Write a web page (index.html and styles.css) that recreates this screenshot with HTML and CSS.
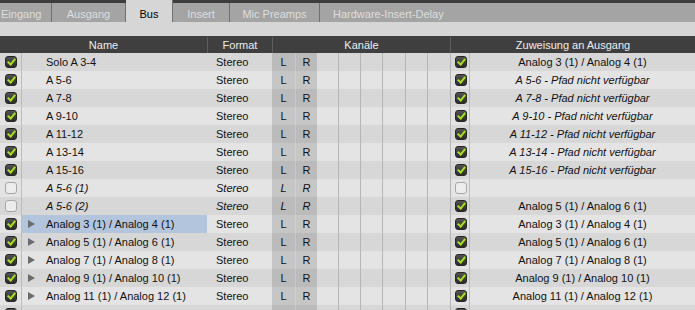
FILE: index.html
```html
<!DOCTYPE html>
<html lang="de">

<head>
    <meta charset="UTF-8">
    <title>Bus</title>
    <link rel="stylesheet" href="styles.css">
</head>

<body>
    <div class="tabs">
        <div class="tab first">Eingang</div>
        <div class="tab">Ausgang</div>
        <div class="tab active">Bus</div>
        <div class="tab">Insert</div>
        <div class="tab">Mic Preamps</div>
        <div class="tab last">Hardware-Insert-Delay</div>
    </div>

    <div class="toolbar"></div>

    <div class="table">
        <div class="row head">
            <div class="h-name">Name</div>
            <div class="h-format">Format</div>
            <div class="h-ch">Kanäle</div>
            <div class="h-assign">Zuweisung an Ausgang</div>
        </div>

        <div class="row">
            <div class="cb"><span class="chk on"></span></div>
            <div class="name">Solo A 3-4</div>
            <div class="format">Stereo</div>
            <div class="l">L</div><div class="r">R</div>
            <div class="ch"></div><div class="ch"></div><div class="ch"></div><div class="ch"></div><div class="ch"></div><div class="ch"></div>
            <div class="acb"><span class="chk on"></span></div>
            <div class="assign">Analog 3 (1) / Analog 4 (1)</div>
        </div>
        <div class="row">
            <div class="cb"><span class="chk on"></span></div>
            <div class="name">A 5-6</div>
            <div class="format">Stereo</div>
            <div class="l">L</div><div class="r">R</div>
            <div class="ch"></div><div class="ch"></div><div class="ch"></div><div class="ch"></div><div class="ch"></div><div class="ch"></div>
            <div class="acb"><span class="chk on"></span></div>
            <div class="assign missing">A 5-6 - Pfad nicht verfügbar</div>
        </div>
        <div class="row">
            <div class="cb"><span class="chk on"></span></div>
            <div class="name">A 7-8</div>
            <div class="format">Stereo</div>
            <div class="l">L</div><div class="r">R</div>
            <div class="ch"></div><div class="ch"></div><div class="ch"></div><div class="ch"></div><div class="ch"></div><div class="ch"></div>
            <div class="acb"><span class="chk on"></span></div>
            <div class="assign missing">A 7-8 - Pfad nicht verfügbar</div>
        </div>
        <div class="row">
            <div class="cb"><span class="chk on"></span></div>
            <div class="name">A 9-10</div>
            <div class="format">Stereo</div>
            <div class="l">L</div><div class="r">R</div>
            <div class="ch"></div><div class="ch"></div><div class="ch"></div><div class="ch"></div><div class="ch"></div><div class="ch"></div>
            <div class="acb"><span class="chk on"></span></div>
            <div class="assign missing">A 9-10 - Pfad nicht verfügbar</div>
        </div>
        <div class="row">
            <div class="cb"><span class="chk on"></span></div>
            <div class="name">A 11-12</div>
            <div class="format">Stereo</div>
            <div class="l">L</div><div class="r">R</div>
            <div class="ch"></div><div class="ch"></div><div class="ch"></div><div class="ch"></div><div class="ch"></div><div class="ch"></div>
            <div class="acb"><span class="chk on"></span></div>
            <div class="assign missing">A 11-12 - Pfad nicht verfügbar</div>
        </div>
        <div class="row">
            <div class="cb"><span class="chk on"></span></div>
            <div class="name">A 13-14</div>
            <div class="format">Stereo</div>
            <div class="l">L</div><div class="r">R</div>
            <div class="ch"></div><div class="ch"></div><div class="ch"></div><div class="ch"></div><div class="ch"></div><div class="ch"></div>
            <div class="acb"><span class="chk on"></span></div>
            <div class="assign missing">A 13-14 - Pfad nicht verfügbar</div>
        </div>
        <div class="row">
            <div class="cb"><span class="chk on"></span></div>
            <div class="name">A 15-16</div>
            <div class="format">Stereo</div>
            <div class="l">L</div><div class="r">R</div>
            <div class="ch"></div><div class="ch"></div><div class="ch"></div><div class="ch"></div><div class="ch"></div><div class="ch"></div>
            <div class="acb"><span class="chk on"></span></div>
            <div class="assign missing">A 15-16 - Pfad nicht verfügbar</div>
        </div>
        <div class="row inactive">
            <div class="cb"><span class="chk off"></span></div>
            <div class="name">A 5-6 (1)</div>
            <div class="format">Stereo</div>
            <div class="l">L</div><div class="r">R</div>
            <div class="ch"></div><div class="ch"></div><div class="ch"></div><div class="ch"></div><div class="ch"></div><div class="ch"></div>
            <div class="acb"><span class="chk off"></span></div>
            <div class="assign"></div>
        </div>
        <div class="row inactive">
            <div class="cb"><span class="chk off"></span></div>
            <div class="name">A 5-6 (2)</div>
            <div class="format">Stereo</div>
            <div class="l">L</div><div class="r">R</div>
            <div class="ch"></div><div class="ch"></div><div class="ch"></div><div class="ch"></div><div class="ch"></div><div class="ch"></div>
            <div class="acb"><span class="chk on"></span></div>
            <div class="assign">Analog 5 (1) / Analog 6 (1)</div>
        </div>
        <div class="row">
            <div class="cb"><span class="chk on"></span></div>
            <div class="name selected"><span class="tri"></span>Analog 3 (1) / Analog 4 (1)</div>
            <div class="format">Stereo</div>
            <div class="l">L</div><div class="r">R</div>
            <div class="ch"></div><div class="ch"></div><div class="ch"></div><div class="ch"></div><div class="ch"></div><div class="ch"></div>
            <div class="acb"><span class="chk on"></span></div>
            <div class="assign">Analog 3 (1) / Analog 4 (1)</div>
        </div>
        <div class="row">
            <div class="cb"><span class="chk on"></span></div>
            <div class="name"><span class="tri"></span>Analog 5 (1) / Analog 6 (1)</div>
            <div class="format">Stereo</div>
            <div class="l">L</div><div class="r">R</div>
            <div class="ch"></div><div class="ch"></div><div class="ch"></div><div class="ch"></div><div class="ch"></div><div class="ch"></div>
            <div class="acb"><span class="chk on"></span></div>
            <div class="assign">Analog 5 (1) / Analog 6 (1)</div>
        </div>
        <div class="row">
            <div class="cb"><span class="chk on"></span></div>
            <div class="name"><span class="tri"></span>Analog 7 (1) / Analog 8 (1)</div>
            <div class="format">Stereo</div>
            <div class="l">L</div><div class="r">R</div>
            <div class="ch"></div><div class="ch"></div><div class="ch"></div><div class="ch"></div><div class="ch"></div><div class="ch"></div>
            <div class="acb"><span class="chk on"></span></div>
            <div class="assign">Analog 7 (1) / Analog 8 (1)</div>
        </div>
        <div class="row">
            <div class="cb"><span class="chk on"></span></div>
            <div class="name"><span class="tri"></span>Analog 9 (1) / Analog 10 (1)</div>
            <div class="format">Stereo</div>
            <div class="l">L</div><div class="r">R</div>
            <div class="ch"></div><div class="ch"></div><div class="ch"></div><div class="ch"></div><div class="ch"></div><div class="ch"></div>
            <div class="acb"><span class="chk on"></span></div>
            <div class="assign">Analog 9 (1) / Analog 10 (1)</div>
        </div>
        <div class="row">
            <div class="cb"><span class="chk on"></span></div>
            <div class="name"><span class="tri"></span>Analog 11 (1) / Analog 12 (1)</div>
            <div class="format">Stereo</div>
            <div class="l">L</div><div class="r">R</div>
            <div class="ch"></div><div class="ch"></div><div class="ch"></div><div class="ch"></div><div class="ch"></div><div class="ch"></div>
            <div class="acb"><span class="chk on"></span></div>
            <div class="assign">Analog 11 (1) / Analog 12 (1)</div>
        </div>
        <!-- next row only peeks in at the bottom edge -->
        <div class="row">
            <div class="cb"><span class="chk on"></span></div>
            <div class="name"></div>
            <div class="format"></div>
            <div class="l"></div><div class="r"></div>
            <div class="ch"></div><div class="ch"></div><div class="ch"></div><div class="ch"></div><div class="ch"></div><div class="ch"></div>
            <div class="acb"><span class="chk on"></span></div>
            <div class="assign"></div>
        </div>
    </div>
</body>

</html>
```

FILE: styles.css
```css
body {
    margin: 0;
    padding: 0;
    width: 695px;
    height: 310px;
    overflow: hidden;
    background-color: #d6d6d6;
    font-family: "Liberation Sans", Arial, sans-serif;
    font-size: 11px;
    color: #111;
}

/* tab strip */

.tabs {
    display: flex;
    height: 22px;
    background-color: #3c3c3c;
    overflow: hidden;
}

.tab {
    box-sizing: border-box;
    flex: none;
    height: 19px;
    margin-top: 3px;
    padding-bottom: 1px;
    display: flex;
    align-items: flex-end;
    justify-content: center;
    background-color: #a4a4a4;
    color: #dedede;
    border-right: 1px solid #707070;
    line-height: 13px;
}

.tab.first {
    width: 52px;
    justify-content: flex-start;
    padding-left: 1px;
}

.tab:nth-child(2) { width: 74px; }
.tab.active { width: 47px; }
.tab:nth-child(4) { width: 57px; }
.tab:nth-child(5) { width: 90px; }

.tab.active {
    height: 22px;
    margin-top: 0;
    background-color: #d6d6d6;
    color: #000;
}

.tab.last {
    flex: 1;
    justify-content: flex-start;
    padding-left: 13px;
    border-right: none;
}

.toolbar {
    height: 14px;
    background-color: #d6d6d6;
}

/* table */

.row {
    display: grid;
    grid-template-columns: 22px 185px 65px 23px 22px repeat(6, 1fr) 20px 225px;
    height: 18px;
    line-height: 18px;
    background-color: #d7d7d7;
}

.row:nth-child(odd) {
    background-color: #e4e4e4;
}

.row > div {
    box-sizing: border-box;
    white-space: nowrap;
    overflow: hidden;
}

.row.head {
    height: 17px;
    line-height: 17px;
    padding-top: 1px;
    box-sizing: border-box;
    background-color: #3f3f3f;
    color: #eeeeee;
    text-align: center;
}

.h-name { grid-column: 1 / 3; }
.h-format { grid-column: 3 / 4; border-left: 1px solid #5e5e5e; }
.h-ch { grid-column: 4 / 12; border-left: 1px solid #5e5e5e; }
.h-assign { grid-column: 12 / 14; border-left: 1px solid #5e5e5e; }

.cb,
.acb {
    display: flex;
    align-items: center;
    padding-left: 5px;
    border-right: 1px solid #bdbdbd;
}

.acb {
    border-left: 1px solid #b4b4b4;
    padding-left: 4px;
}

.name {
    display: flex;
    align-items: center;
    padding-left: 24px;
}

.name.selected {
    background-color: #b3c4dd;
}

.tri {
    width: 0;
    height: 0;
    margin-left: -18px;
    margin-right: 11px;
    border-left: 7px solid #6c6c6c;
    border-top: 4px solid transparent;
    border-bottom: 4px solid transparent;
}

.format {
    padding-left: 9px;
}

.l,
.r {
    text-align: center;
    background-color: rgba(0, 0, 0, 0.13);
}

.r {
    border-left: 1px solid rgba(255, 255, 255, 0.2);
}

.ch {
    border-right: 1px solid #b6b6b6;
}

.ch:nth-of-type(11) {
    border-right: none;
}

.assign {
    text-align: center;
}

.missing,
.inactive .name,
.inactive .format,
.inactive .l,
.inactive .r {
    font-style: italic;
}

/* checkboxes */

.chk {
    position: relative;
    display: block;
    box-sizing: border-box;
    width: 12px;
    height: 12px;
    border-radius: 3px;
}

.chk.on {
    background: linear-gradient(#525252, #2c2c2c);
    border: 1px solid #262626;
}

.chk.on::after {
    content: "";
    position: absolute;
    left: 3px;
    top: 0px;
    width: 3px;
    height: 6px;
    border: solid #a8e21e;
    border-width: 0 2.5px 2.5px 0;
    transform: rotate(40deg);
}

.chk.off {
    background-color: #ececec;
    border: 1px solid #a8a8a8;
}
```
